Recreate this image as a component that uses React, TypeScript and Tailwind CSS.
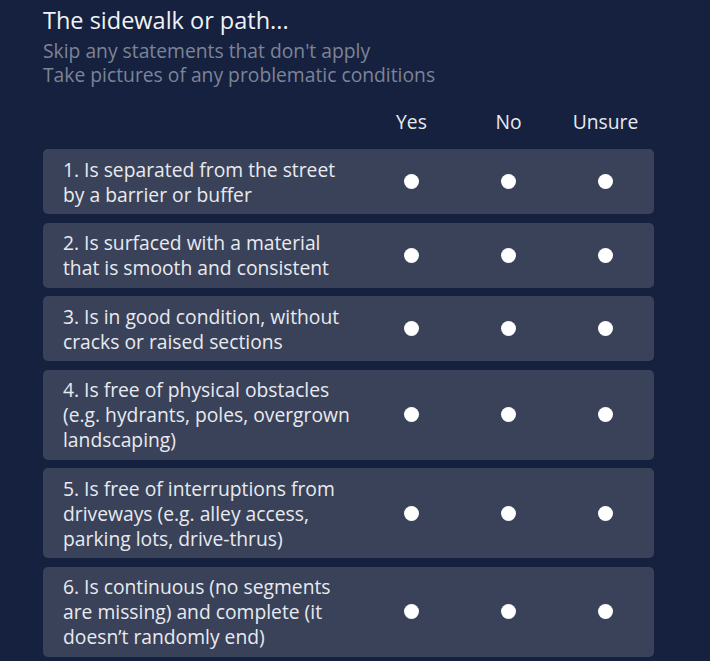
const questions = [
  '1. Is separated from the street by a barrier or buffer',
  '2. Is surfaced with a material that is smooth and consistent',
  '3. Is in good condition, without cracks or raised sections',
  '4. Is free of physical obstacles (e.g. hydrants, poles, overgrown landscaping)',
  '5. Is free of interruptions from driveways (e.g. alley access, parking lots, drive-thrus)',
  '6. Is continuous (no segments are missing) and complete (it doesn\u2019t randomly end)',
];

const options = ['Yes', 'No', 'Unsure'];

function Dot() {
  return <span className="block h-[15px] w-[15px] rounded-full bg-white" />;
}

export default function App() {
  return (
    <main
      className="min-h-[661px] bg-[#16213f] pl-[43px] pr-[56px] pt-[5px] pb-4"
      style={{ fontFamily: '"Open Sans", "Noto Sans", sans-serif' }}
    >
      {/* Heading */}
      <h1 className="mb-[4px] text-[23.5px] leading-[30px] text-[#f1f2f5]">The sidewalk or path...</h1>
      <div className="text-[19.3px] leading-[24px] text-[#7c8498]">
        <p>Skip any statements that don't apply</p>
        <p>Take pictures of any problematic conditions</p>
      </div>

      {/* Column labels */}
      <div className="mt-[23px] flex">
        <div className="flex-1" />
        {options.map((o) => (
          <div key={o} className="w-[97px] text-center text-[19.3px] leading-[24px] text-[#e9eaef]">
            {o}
          </div>
        ))}
      </div>

      {/* Statements */}
      <div className="mt-[15px] flex flex-col gap-[8.5px]">
        {questions.map((q) => (
          <div key={q} className="flex items-center rounded-[5px] bg-[#394259] py-[7.5px] pl-[20px]">
            <p className="flex-1 pr-[10px] text-[19.3px] leading-[25px] text-[#e9eaef]">{q}</p>
            {options.map((o) => (
              <div key={o} className="flex w-[97px] justify-center">
                <Dot />
              </div>
            ))}
          </div>
        ))}
      </div>
    </main>
  );
}
